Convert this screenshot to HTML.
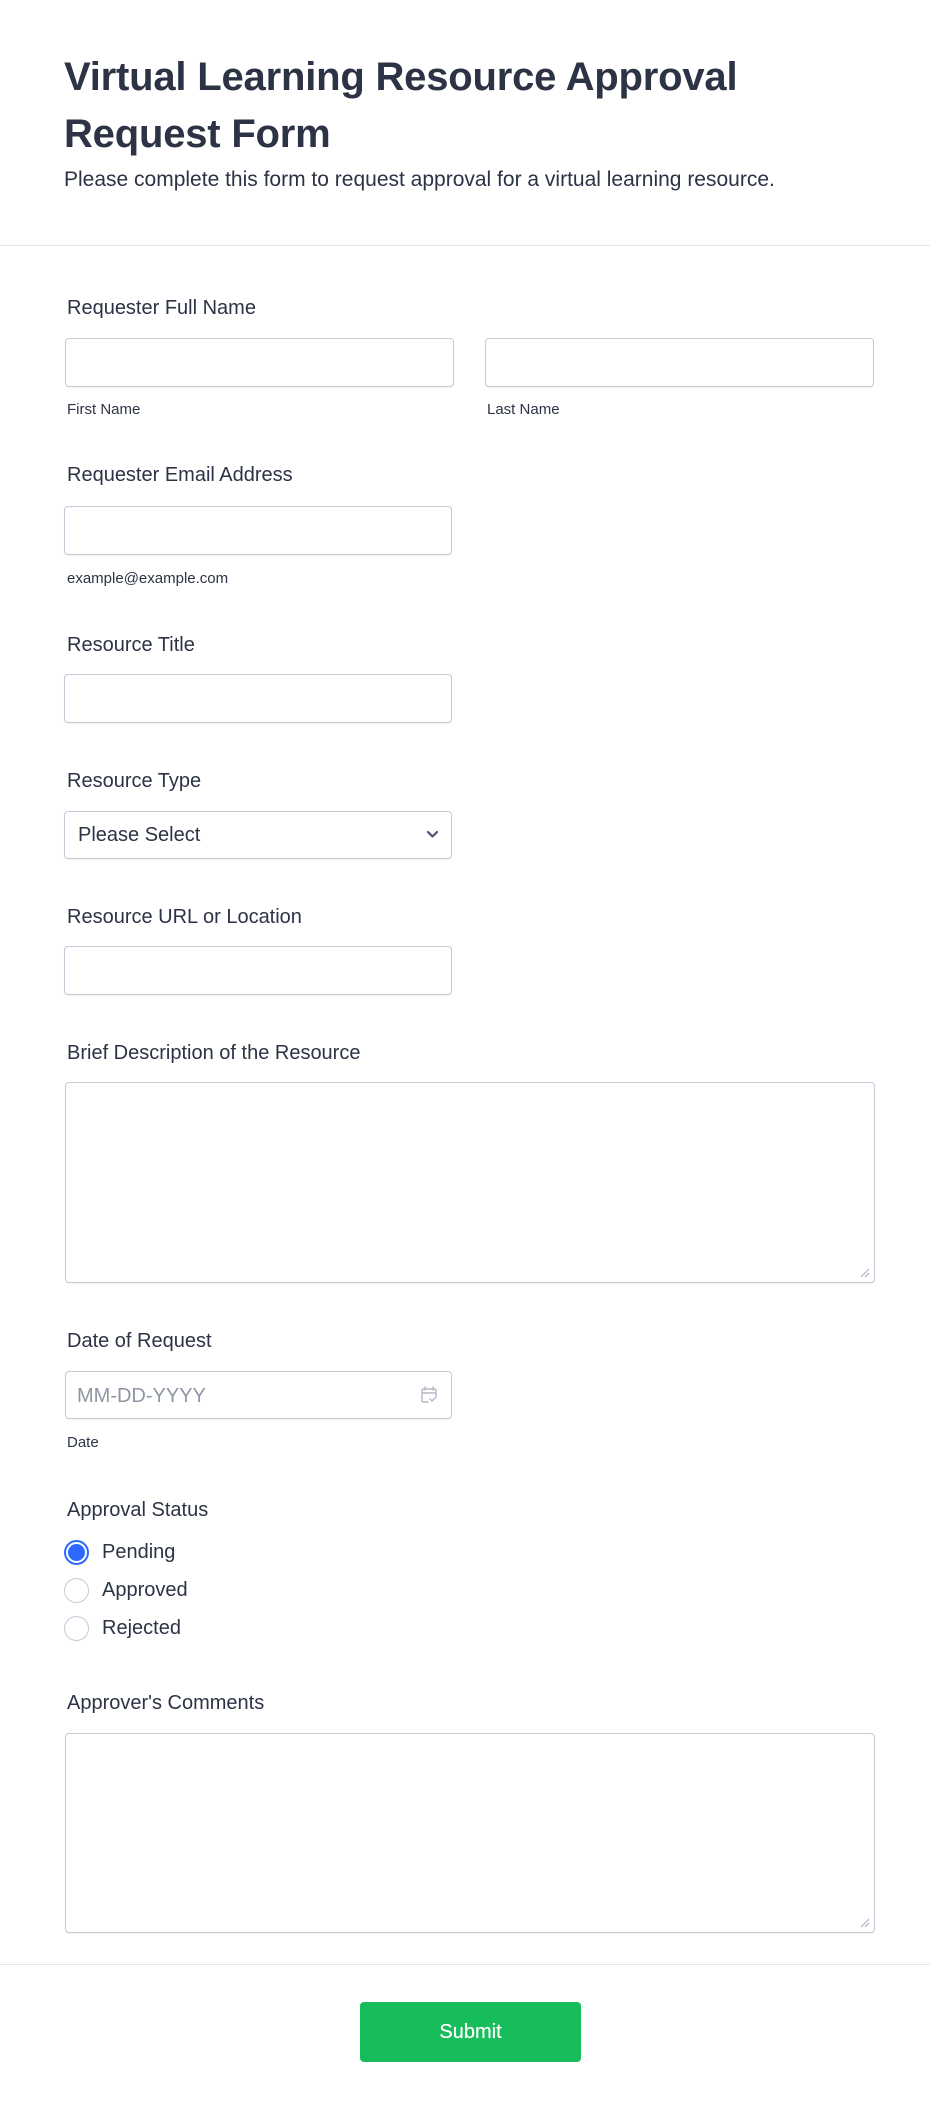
<!DOCTYPE html>
<html><head><meta charset="utf-8">
<style>
*{margin:0;padding:0;box-sizing:border-box}
body{width:930px;height:2111px;background:#fff;position:relative;font-family:"Liberation Sans",Arial,sans-serif;color:#2c3345;overflow:hidden}
.t{position:absolute;line-height:1;white-space:nowrap}
.lab{font-size:20px}
.sub{font-size:15px}
.box{position:absolute;border:1px solid #c3cad8;border-radius:4px;background:#fff;box-shadow:0 1px 1px rgba(0,0,0,0.05)}
.hr{position:absolute;left:0;width:930px;height:1px;background:#e3e5eb}
.rad{position:absolute;left:64px;width:25px;height:25px;border-radius:50%;border:1px solid #c3cad8}
</style></head><body>
<div class="t" style="left:64px;top:57px;font-size:40px;font-weight:bold;letter-spacing:-0.2px">Virtual Learning Resource Approval</div>
<div class="t" style="left:64px;top:114px;font-size:40px;font-weight:bold;letter-spacing:-0.2px">Request Form</div>
<div class="t" style="left:64px;top:169px;font-size:21px">Please complete this form to request approval for a virtual learning resource.</div>
<div class="hr" style="top:245px"></div>

<div class="t lab" style="left:67px;top:298px">Requester Full Name</div>
<div class="box" style="left:65px;top:338px;width:389px;height:49px"></div>
<div class="box" style="left:485px;top:338px;width:389px;height:49px"></div>
<div class="t sub" style="left:67px;top:402px">First Name</div>
<div class="t sub" style="left:487px;top:402px">Last Name</div>

<div class="t lab" style="left:67px;top:465px">Requester Email Address</div>
<div class="box" style="left:64px;top:506px;width:388px;height:49px"></div>
<div class="t sub" style="left:67px;top:571px">example@example.com</div>

<div class="t lab" style="left:67px;top:635px">Resource Title</div>
<div class="box" style="left:64px;top:674px;width:388px;height:49px"></div>

<div class="t lab" style="left:67px;top:771px">Resource Type</div>
<div class="box" style="left:64px;top:811px;width:388px;height:48px"></div>
<div class="t" style="left:78px;top:825px;font-size:20px">Please Select</div>
<svg style="position:absolute;left:426px;top:830px" width="13" height="9" viewBox="0 0 13 9"><path d="M2 2 L6.5 6.5 L11 2" fill="none" stroke="#4a5470" stroke-width="2.2" stroke-linecap="round" stroke-linejoin="round"/></svg>

<div class="t lab" style="left:67px;top:907px">Resource URL or Location</div>
<div class="box" style="left:64px;top:946px;width:388px;height:49px"></div>

<div class="t lab" style="left:67px;top:1043px">Brief Description of the Resource</div>
<div class="box" style="left:65px;top:1082px;width:810px;height:201px"></div>
<svg style="position:absolute;left:860px;top:1268px" width="10" height="10"><path d="M1 9 L9 1 M5 9 L9 5" stroke="#aab" stroke-width="1"/></svg>

<div class="t lab" style="left:67px;top:1331px">Date of Request</div>
<div class="box" style="left:65px;top:1371px;width:387px;height:48px"></div>
<div class="t" style="left:77px;top:1386px;font-size:20px;color:#8f96a3">MM-DD-YYYY</div>
<svg style="position:absolute;left:420px;top:1386px" width="18" height="18" viewBox="0 0 18 18"><path d="M5 1v3M13 1v3M2 7h14M8 16H3.5Q2 16 2 14.5V4.5Q2 3 3.5 3h11Q16 3 16 4.5V10M10 13l2 2 4-4" fill="none" stroke="#b3b9c6" stroke-width="1.4" stroke-linecap="round"/></svg>
<div class="t sub" style="left:67px;top:1435px">Date</div>

<div class="t lab" style="left:67px;top:1500px">Approval Status</div>
<div class="rad" style="top:1540px;border:2px solid #2e69ff"><div style="position:absolute;left:2px;top:2px;width:17px;height:17px;border-radius:50%;background:#2e69ff"></div></div>
<div class="t lab" style="left:102px;top:1542px">Pending</div>
<div class="rad" style="top:1578px"></div>
<div class="t lab" style="left:102px;top:1580px">Approved</div>
<div class="rad" style="top:1616px"></div>
<div class="t lab" style="left:102px;top:1618px">Rejected</div>

<div class="t lab" style="left:67px;top:1693px">Approver's Comments</div>
<div class="box" style="left:65px;top:1733px;width:810px;height:200px"></div>
<svg style="position:absolute;left:860px;top:1918px" width="10" height="10"><path d="M1 9 L9 1 M5 9 L9 5" stroke="#aab" stroke-width="1"/></svg>

<div class="hr" style="top:1964px"></div>
<div style="position:absolute;left:360px;top:2002px;width:221px;height:60px;background:#18bd5b;border-radius:4px;color:#fff;font-size:20px;text-shadow:0 0 0.4px #fff;text-align:center;line-height:60px">Submit</div>
</body></html>
